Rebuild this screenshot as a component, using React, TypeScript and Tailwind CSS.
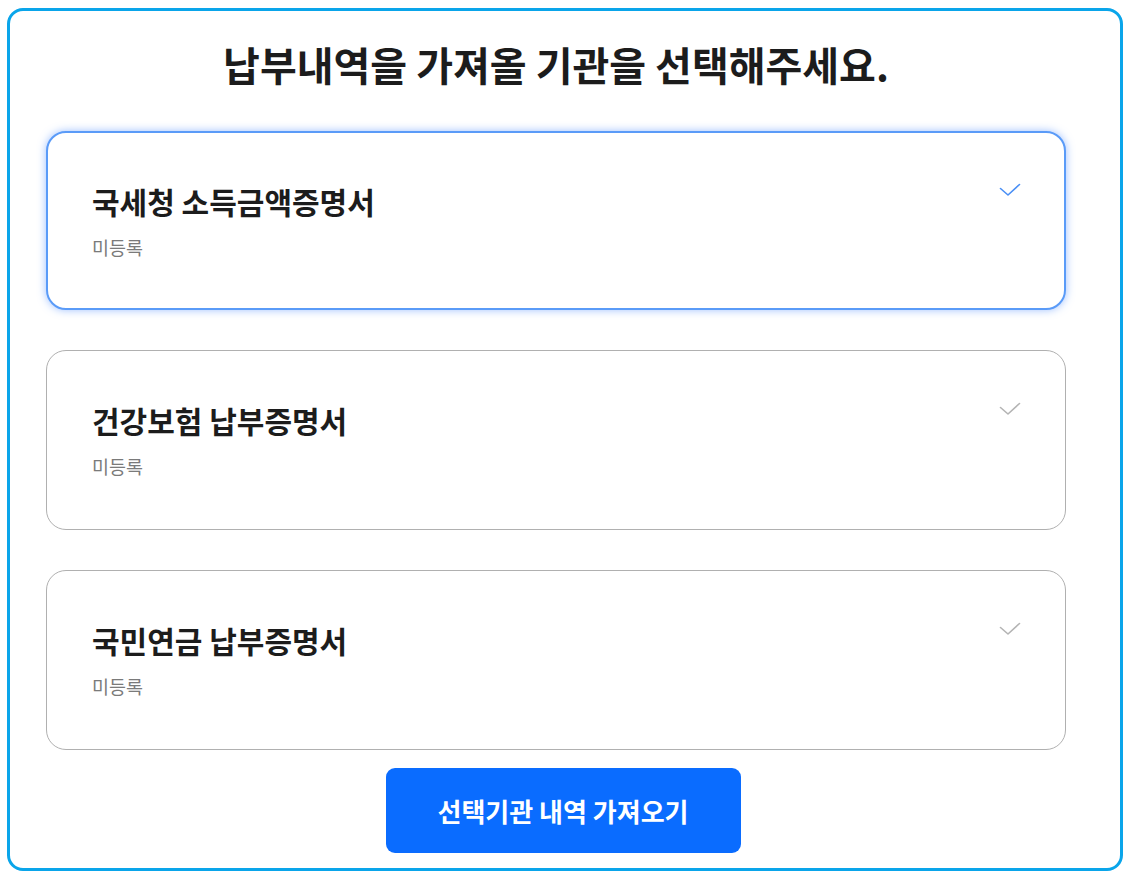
import React from "react";

const items = [
  { title: "국세청 소득금액증명서", status: "미등록", selected: true },
  { title: "건강보험 납부증명서", status: "미등록", selected: false },
  { title: "국민연금 납부증명서", status: "미등록", selected: false },
];

function Check({ active }: { active: boolean }) {
  return (
    <svg width="22" height="14" viewBox="0 0 22 14" fill="none" className="shrink-0 mt-[2px]">
      <path
        d="M1.5 5.5 L9 12 L20.5 1.5"
        stroke={active ? "#4a8ff5" : "#b4b4b4"}
        strokeWidth="1.6"
        strokeLinecap="round"
        strokeLinejoin="round"
      />
    </svg>
  );
}

export default function App() {
  return (
    <div
      className="w-[1125px] h-[877px] bg-white pt-[8px] pl-[7px] pr-[2px] pb-[6px]"
      style={{ fontFamily: '"Noto Sans CJK KR", "Noto Sans", sans-serif' }}
    >
      <div className="h-full w-full rounded-[16px] border-[3px] border-[#0aa5ea] pl-[36px] pt-[28px] flex flex-col">
        <div className="w-[1020px]">
          <h1 className="text-center text-[40px] font-bold text-[#1c1c1c] leading-[50px]">
            납부내역을 가져올 기관을 선택해주세요.
          </h1>
          <div className="mt-[42px] flex flex-col gap-[40px]">
            {items.map((it) => (
              <div
                key={it.title}
                className={
                  it.selected
                    ? "h-[179px] rounded-[20px] border-2 border-[#5a9bf8] shadow-[0_0_8px_rgba(60,130,255,0.5)] bg-white pl-[44px] pr-[43px] pt-[48px] flex justify-between items-start"
                    : "h-[180px] rounded-[20px] border border-[#b0b0b0] bg-white pl-[45px] pr-[44px] pt-[49px] flex justify-between items-start"
                }
              >
                <div className="flex flex-col">
                  <div className="text-[30px] font-bold text-[#1c1c1c] leading-[40px]">{it.title}</div>
                  <div className="mt-[14px] text-[18.5px] text-[#7a7a7a] leading-[24px]">{it.status}</div>
                </div>
                <Check active={it.selected} />
              </div>
            ))}
          </div>
        </div>
        <div className="mt-[18px] flex justify-center pr-[40px]">
          <button className="w-[355px] h-[85px] rounded-[9px] bg-[#0a6cff] text-white text-[26px] font-bold">
            선택기관 내역 가져오기
          </button>
        </div>
      </div>
    </div>
  );
}
